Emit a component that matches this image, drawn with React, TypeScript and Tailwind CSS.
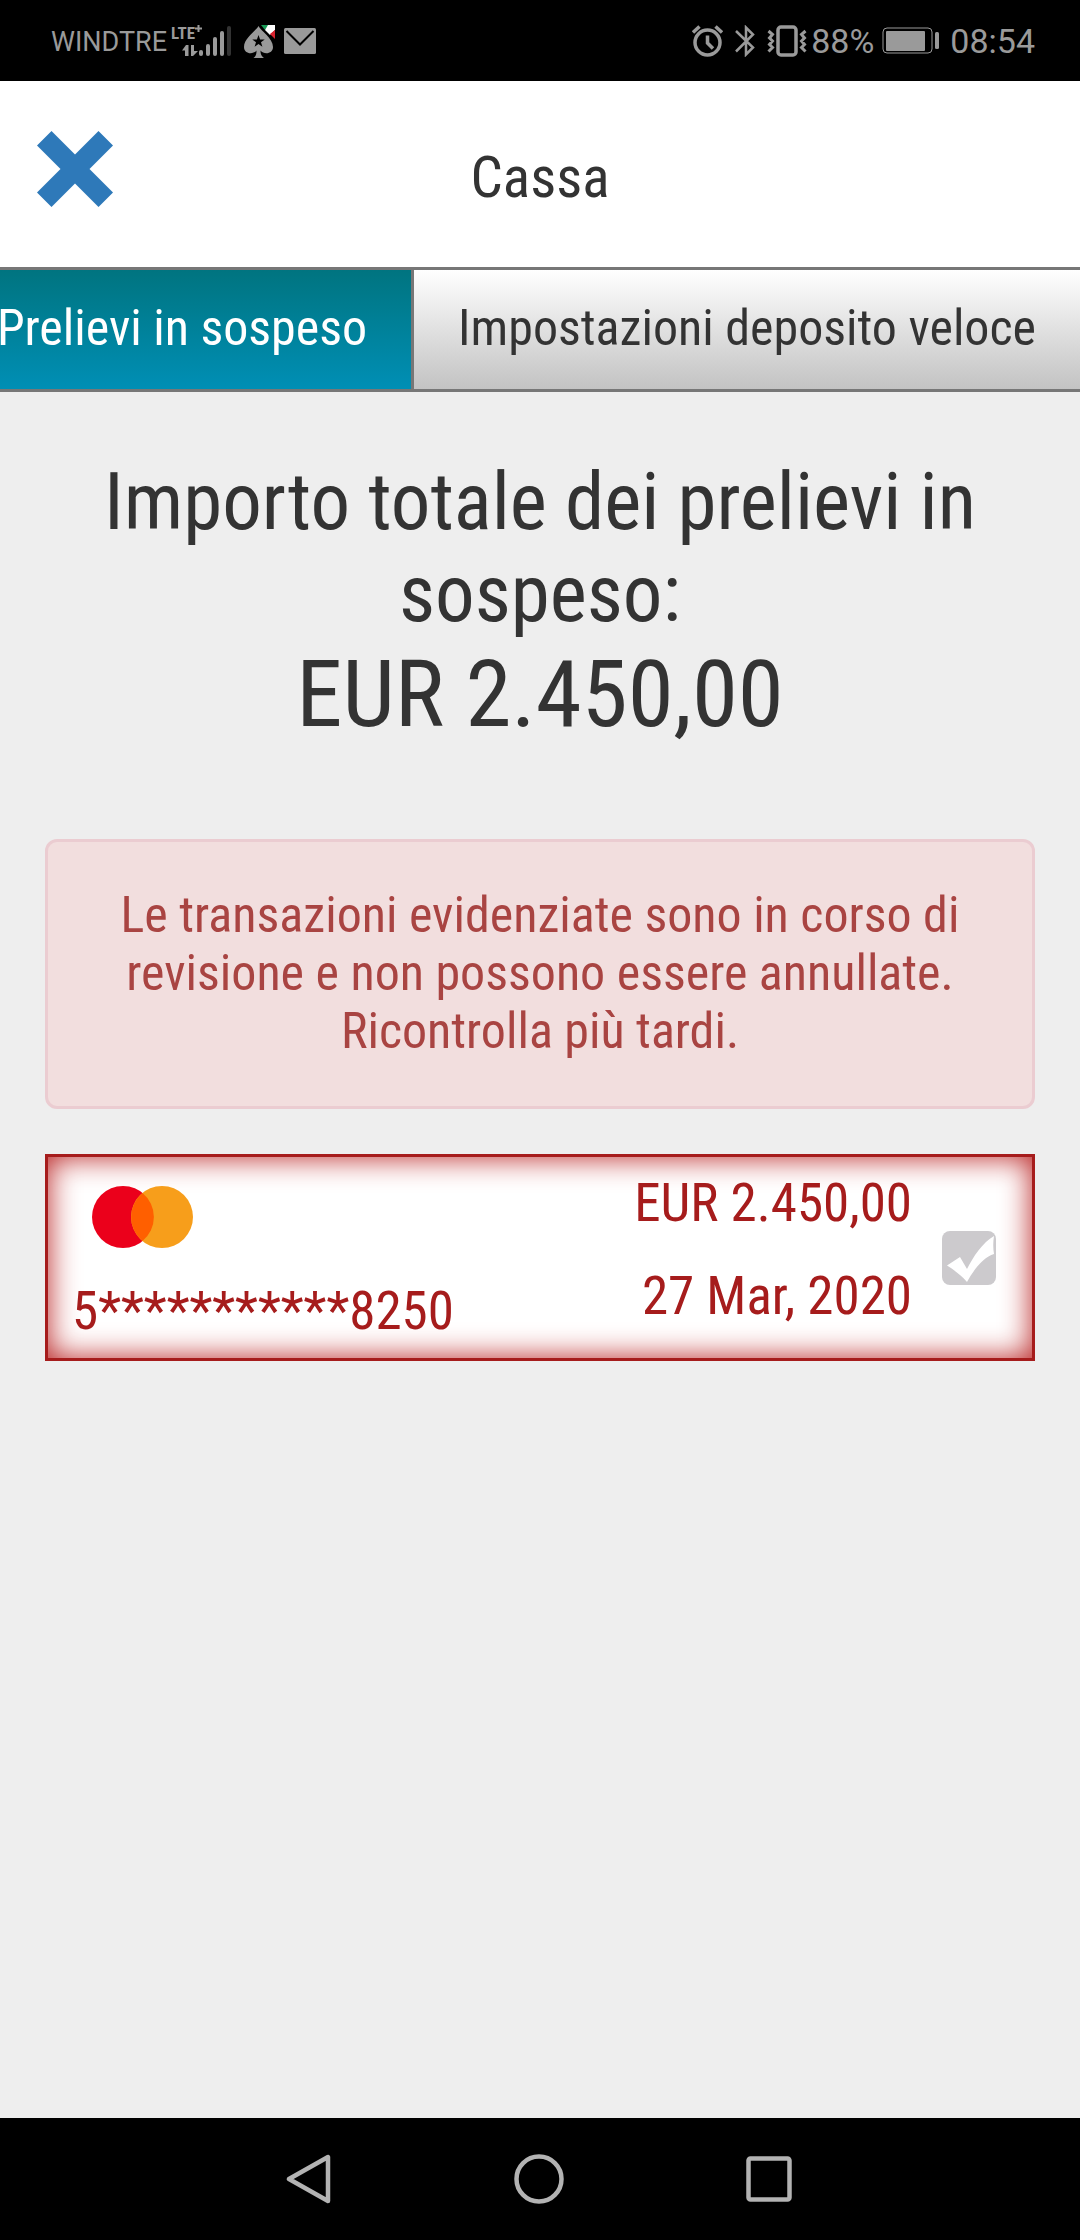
import { useState } from 'react';

const TABS = ['Prelievi in sospeso', 'Impostazioni deposito veloce'];

const WITHDRAWALS = [
  { id: 1, account: '5***********8250', amount: 'EUR 2.450,00', date: '27 Mar, 2020' },
];

function SignalIcon() {
  return (
    <svg className="w-[62px] h-9" viewBox="0 1 62 36" fill="#9a9a9a">
      <text x="0" y="17" fontSize="17" fontWeight="700" fontFamily="'Roboto Condensed', 'Liberation Sans Narrow', Roboto, sans-serif">
        LTE
      </text>
      <path d="M24 6.500h7M27.500 3v7" stroke="#9a9a9a" strokeWidth="2" />
      <path d="M11 28.500h3V34h3.500V23H15z" />
      <path d="M20 23h3v6h4l-5 5h-2z" />
      <rect x="28" y="28" width="4" height="6" rx="2" />
      <rect x="35" y="22" width="4" height="12" rx="2" />
      <rect x="42" y="15" width="4" height="19" rx="2" />
      <rect x="49" y="9" width="4" height="25" rx="2" />
      <rect x="56" y="4" width="4" height="30" rx="2" fill="#333" />
    </svg>
  );
}

function SpadeIcon() {
  return (
    <svg className="w-8 h-9" viewBox="0 0 32 36">
      <path d="M14.500 3C17 8 29 15 29 24c0 7-9 8-12.500 3.500 0 4 1 5.500 3.500 7.500H9.500c2.500-2 3-3.500 3-7.500C9 32 0 31 0 24 0 15 12 8 14.500 3z" fill="#9a9a9a" />
      <path d="m14.500 12 1.600 4.500h4.600l-3.700 2.800 1.400 4.500-3.900-2.700-3.900 2.700 1.400-4.500-3.700-2.800h4.600z" fill="#000" />
      <path d="M17 2h8l-4 5z" fill="#189a55" />
      <path d="M24 2h7v5l-5 5-5-5z" fill="#fff" />
      <path d="M31 7v9l-5-5z" fill="#d8232f" />
    </svg>
  );
}

function MailIcon() {
  return (
    <svg className="w-8 h-[26px]" viewBox="0 0 32 26">
      <rect width="32" height="26" rx="1.500" fill="#9a9a9a" />
      <path d="M2.500 3 16 16.500 29.500 3" fill="none" stroke="#000" strokeWidth="2" />
    </svg>
  );
}

function AlarmIcon() {
  return (
    <svg className="w-[31px] h-8" viewBox="0 0 31 32" fill="none" stroke="#9a9a9a">
      <circle cx="15.500" cy="17.500" r="12.500" strokeWidth="3.500" />
      <path d="M15.500 10.500v7.500l5.500 5.500" strokeWidth="3.500" />
      <path d="M1 7.500 7.500 1.500M30 7.500 23.500 1.500" strokeWidth="3.500" />
    </svg>
  );
}

function BluetoothIcon() {
  return (
    <svg className="w-5 h-8" viewBox="0 0 20 32" fill="none" stroke="#9a9a9a" strokeWidth="2.500">
      <path d="m1 6 17 16.500-7 7V2.500l7 7L1 26.500" />
    </svg>
  );
}

function VibrateIcon() {
  return (
    <svg className="w-10 h-8" viewBox="0 0 40 32" fill="none" stroke="#9a9a9a">
      <rect x="11" y="2" width="18" height="28" rx="3" strokeWidth="3.500" />
      <path d="m1.500 6 4 3.500-3 3.500 3 3-3 3.500 3 3-4 4M38.500 6l-4 3.500 3 3.500-3 3 3 3.500-3 3 4 4" strokeWidth="3" />
    </svg>
  );
}

function BatteryIcon() {
  return (
    <svg className="w-[58px] h-7" viewBox="0 0 58 28" fill="#9a9a9a">
      <rect x="1" y="1" width="49" height="25" rx="4" fill="none" stroke="#9a9a9a" />
      <rect x="4" y="4" width="39" height="20" rx="1" />
      <rect x="53" y="5" width="4" height="17" rx="1.500" />
    </svg>
  );
}

function StatusBar() {
  return (
    <div className="h-[81px] shrink-0 flex items-center justify-between bg-black pl-[51px] pr-[45px] text-[#9a9a9a] font-[Roboto,sans-serif]">
      <div className="flex items-center">
        <span className="text-[27px] leading-8 pt-0.5">WINDTRE</span>
        <span className="ml-1"><SignalIcon /></span>
        <span className="ml-[11px]"><SpadeIcon /></span>
        <span className="ml-2"><MailIcon /></span>
      </div>
      <div className="flex items-center text-[34px] leading-10">
        <AlarmIcon />
        <span className="ml-3"><BluetoothIcon /></span>
        <span className="ml-3"><VibrateIcon /></span>
        <span className="ml-1">88%</span>
        <span className="ml-2"><BatteryIcon /></span>
        <span className="ml-2.5">08:54</span>
      </div>
    </div>
  );
}

function MastercardLogo() {
  return (
    <svg className="w-[101px] h-[62px]" viewBox="0 0 101 62">
      <circle cx="31" cy="31" r="31" fill="#eb001b" />
      <circle cx="70" cy="31" r="31" fill="#f79e1b" />
      <path d="M50.500 7a31 31 0 0 1 0 48 31 31 0 0 1 0-48z" fill="#ff5f00" />
    </svg>
  );
}

function NavBar() {
  return (
    <div className="h-[122px] shrink-0 flex items-center justify-center gap-[182px] bg-black pr-1">
      <button type="button" aria-label="Indietro">
        <svg className="w-12 h-[50px]" viewBox="0 0 48 50" fill="none" stroke="#b3b3b3" strokeWidth="4.500" strokeLinejoin="round">
          <path d="M44 3v44L5 25z" />
        </svg>
      </button>
      <button type="button" aria-label="Home">
        <svg className="w-[50px] h-[50px]" viewBox="0 0 50 50" fill="none" stroke="#b3b3b3" strokeWidth="4.500">
          <circle cx="25" cy="25" r="22.500" />
        </svg>
      </button>
      <button type="button" aria-label="Recenti">
        <svg className="w-[46px] h-[46px]" viewBox="0 0 46 46" fill="none" stroke="#b3b3b3" strokeWidth="4.500">
          <rect x="2.500" y="2.500" width="41" height="41" rx="2" />
        </svg>
      </button>
    </div>
  );
}

export default function App() {
  const [activeTab, setActiveTab] = useState(0);

  return (
    <div className="min-h-screen flex flex-col bg-[#eee] text-[#333] font-['Roboto_Condensed','Liberation_Sans_Narrow',Roboto,sans-serif]">
      <StatusBar />

      <header className="h-[186px] shrink-0 grid grid-cols-[1fr_auto_1fr] items-center bg-white px-9">
        <button type="button" aria-label="Chiudi" className="justify-self-start pb-2.5">
          <svg className="w-[78px] h-[78px]" viewBox="0 0 78 78" fill="#2e79b9">
            <path d="M15.500 1 39 24.500 62.500 1 77 15.500 53.500 39 77 62.500 62.500 77 39 53.500 15.500 77 1 62.500 24.500 39 1 15.500z" />
          </svg>
        </button>
        <h1 className="text-[57px] leading-[68px] pt-2">Cassa</h1>
      </header>

      <nav className="shrink-0 flex justify-end overflow-hidden border-y-3 border-[#777]">
        {TABS.map((tab, i) => (
          <button
            key={tab}
            type="button"
            onClick={() => setActiveTab(i)}
            className={`shrink-0 h-[119px] px-11 pb-1 text-[50px] leading-[58px] whitespace-nowrap
              ${i > 0 ? 'border-l-3 border-[#777]' : ''}
              ${i === activeTab ? 'bg-linear-to-b from-[#007480] to-[#008fb5] text-white' : 'bg-linear-to-b from-white to-[#c3c3c3]'}`}
          >
            {tab}
          </button>
        ))}
      </nav>

      <main className="grow px-[45px] pt-16">
        <h2 className="text-center text-[79px] leading-[92px]">
          Importo totale dei prelievi in sospeso:
          <span className="block text-[93px] leading-[110px]">EUR 2.450,00</span>
        </h2>

        <p className="mt-[89px] px-16 pt-11 pb-[46px] text-center text-[50px] leading-[58px] text-[#a94442] bg-[#f2dede] border-3 border-[#ebccd1] rounded-xl">
          Le transazioni evidenziate sono in corso di revisione e non possono essere annullate. Ricontrolla più tardi.
        </p>

        {WITHDRAWALS.map(item => (
          <label
            key={item.id}
            className="mt-[45px] flex items-center h-[207px] pl-6 pr-9 bg-white border-3 border-[#a61c1c] shadow-[inset_0_0_30px_#b71c1c] text-[53px] leading-[62px] text-[#a61c1c]"
          >
            <span className="grow flex flex-col gap-8 pt-3">
              <span className="pl-5"><MastercardLogo /></span>
              <span>{item.account}</span>
            </span>
            <span className="flex flex-col gap-[31px] pb-4 text-right">
              <span>{item.amount}</span>
              <span>{item.date}</span>
            </span>
            <span className="relative ml-[30px] size-[54px] shrink-0">
              <input type="checkbox" defaultChecked disabled className="appearance-none block size-[54px] rounded-lg bg-[#cccacd]" />
              <svg className="absolute inset-0 pointer-events-none" viewBox="0 0 54 54" fill="#fff">
                <path d="M5 34.500 18 26l7 12C31 26 41 11 52 5c-1 6-1 12 0 18-10 3-20 15-27 28-6-7-13-12-20-16.500z" />
              </svg>
            </span>
          </label>
        ))}
      </main>

      <NavBar />
    </div>
  );
}
